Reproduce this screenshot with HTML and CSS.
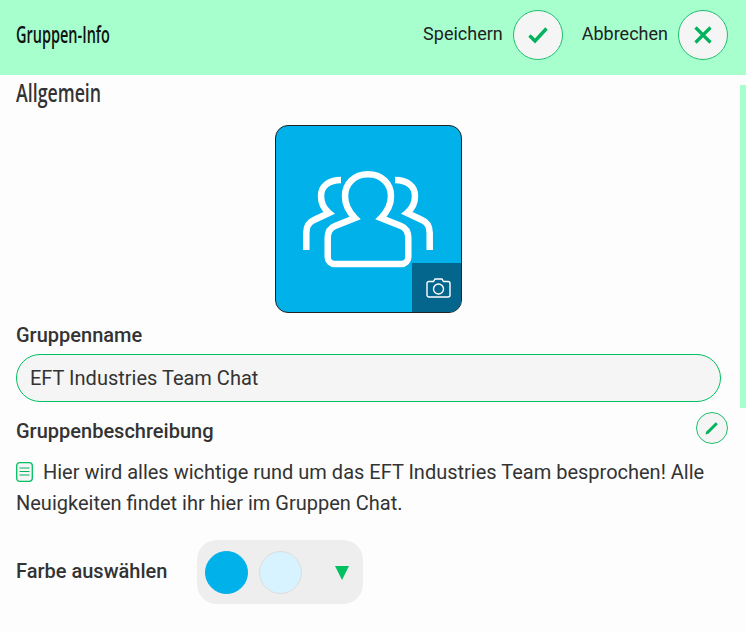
FILE: index.html
```html
<!DOCTYPE html>
<html lang="de">
<head>
    <meta charset="UTF-8">
    <meta name="viewport" content="width=device-width, initial-scale=1.0">
    <title>Gruppen-Info</title>
    <link rel="stylesheet" href="styles.css">
</head>
<body>
    <header class="topbar">
        <h1 class="topbar-title"><span class="narrow">Gruppen-Info</span></h1>
        <div class="topbar-actions">
            <span class="action-label">Speichern</span>
            <button class="round-btn">
                <svg width="20" height="17" viewBox="0 0 20 17"><path d="M1.500 8.500l5.500 5.500L18.500 1.500" fill="none" stroke="#00b35c" stroke-width="3.400"/></svg>
            </button>
            <span class="action-label action-label-second">Abbrechen</span>
            <button class="round-btn">
                <svg width="18" height="18" viewBox="0 0 18 18"><path d="M1.500 1.500l15 15M16.500 1.500l-15 15" fill="none" stroke="#00b35c" stroke-width="3.200"/></svg>
            </button>
        </div>
    </header>

    <div class="scroll-thumb"></div>

    <main class="content">
        <h2 class="section-title"><span class="narrow">Allgemein</span></h2>

        <div class="avatar-row">
            <div class="avatar">
                <svg class="avatar-icon" width="130" height="98" viewBox="0 0 130 98">
                    <g fill="none" stroke="#fff" stroke-width="6.500">
                        <path d="M65 4.200C51 4.200 42 14 42 26c0 9 4 16 10 22L32 56c-5 2-7.300 7-7.300 12v19a7 7 0 0 0 7 7h66.600a7 7 0 0 0 7-7V68c0-5-2.300-10-7.300-12L78 48c6-6 10-13 10-22C88 14 79 4.200 65 4.200z"/>
                        <path d="M38 10C26 10 18 16 18 26c0 7 2 12 8 17l-15 7c-5 2-7.700 7-7.700 13v17"/>
                        <path d="M92 10c12 0 20 6 20 16 0 7-2 12-8 17l15 7c5 2 7.700 7 7.700 13v17"/>
                    </g>
                </svg>
                <div class="avatar-camera">
                    <svg width="25" height="20" viewBox="0 0 25 20"><g fill="none" stroke="#fff" stroke-width="1.400"><path d="M3 3.500h4.500L9 1h7l1.500 2.500H22a2 2 0 0 1 2 2V17a2 2 0 0 1-2 2H3a2 2 0 0 1-2-2V5.500a2 2 0 0 1 2-2z"/><circle cx="12.500" cy="11" r="5"/></g></svg>
                </div>
            </div>
        </div>

        <label class="field-label name-label">Gruppenname</label>
        <div class="name-input">EFT Industries Team Chat</div>

        <div class="desc-head">
            <span class="field-label desc-label">Gruppenbeschreibung</span>
            <button class="round-btn round-btn-small">
                <svg width="14" height="14" viewBox="0 0 14 14"><path d="M0.500 13.500l0.700-2.800L10.800 1.200l2 2-9.500 9.600z" fill="#00b35c"/></svg>
            </button>
        </div>

        <p class="desc-text">
            <svg class="desc-icon" width="17" height="20" viewBox="0 0 17 20"><rect x="0.700" y="0.700" width="15.600" height="18.600" rx="3" fill="#f5f5f5" stroke="#00c060" stroke-width="1.300"/><path d="M3.500 6h10M3.500 9.500h10M3.500 13h10" stroke="#00b35c" stroke-width="1"/></svg>
            Hier wird alles wichtige rund um das EFT Industries Team besprochen! Alle Neuigkeiten findet ihr hier im Gruppen Chat.
        </p>

        <div class="color-row">
            <span class="field-label">Farbe auswählen</span>
            <div class="color-picker">
                <span class="swatch swatch-blue"></span>
                <span class="swatch swatch-light"></span>
                <span class="picker-arrow"></span>
            </div>
        </div>
    </main>
</body>
</html>
```

FILE: styles.css
```css
html, body {
    margin: 0;
    height: 632px;
    overflow: hidden;
    background: #fdfdfd;
}
body {
    position: relative;
    font-family: Roboto, Arial, sans-serif;
    color: #333;
}
.narrow {
    display: inline-block;
    font-family: "Open Sans", Arial, sans-serif;
    font-weight: 600;
    transform-origin: left center;
}
.topbar {
    height: 75px;
    box-sizing: border-box;
    background: #a6ffcd;
    display: flex;
    align-items: center;
    justify-content: space-between;
    padding: 0 18px 5px 16px;
}
.topbar-title {
    margin: -3px 0 0;
    font-size: 23px;
    color: #111;
}
.topbar-title .narrow {
    transform: scaleX(0.63);
}
.topbar-actions {
    display: flex;
    align-items: center;
}
.action-label {
    font-size: 18px;
    color: #222;
    margin-right: 10px;
    margin-top: -3px;
}
.action-label-second {
    margin-left: 19px;
}
.round-btn {
    width: 50px;
    height: 50px;
    padding: 0;
    border: 1px solid #1fbf6f;
    border-radius: 50%;
    background: #f5f5f5;
    display: flex;
    align-items: center;
    justify-content: center;
}
.round-btn-small {
    width: 32px;
    height: 32px;
}
.scroll-thumb {
    position: absolute;
    right: 0;
    top: 85px;
    width: 6px;
    height: 323px;
    background: #a6ffcd;
}
.content {
    padding: 0 18px 0 16px;
}
.section-title {
    margin: 0;
    height: 50px;
    font-size: 25px;
    line-height: 34px;
    color: #333;
}
.section-title .narrow {
    transform: scaleX(0.71);
}
.avatar-row {
    display: flex;
    justify-content: center;
    padding-right: 8px;
}
.avatar {
    position: relative;
    width: 185px;
    height: 186px;
    border: 1px solid #222;
    border-radius: 13px;
    background: #00b1ea;
    overflow: hidden;
}
.avatar-icon {
    position: absolute;
    left: 27px;
    top: 44px;
}
.avatar-camera {
    position: absolute;
    right: 0;
    bottom: 0;
    width: 49px;
    height: 49px;
    box-sizing: border-box;
    padding-left: 4px;
    background: #05668d;
    display: flex;
    align-items: center;
    justify-content: center;
}
.field-label {
    font-size: 20px;
    font-weight: 500;
    line-height: 22px;
    color: #333;
}
.name-label {
    display: block;
    margin-top: 11px;
}
.name-input {
    box-sizing: border-box;
    width: 705px;
    height: 48px;
    margin-top: 8px;
    padding: 0 13px;
    border: 1px solid #00c060;
    border-radius: 24px;
    background: #f5f5f5;
    font-size: 20px;
    line-height: 46px;
}
.desc-head {
    display: flex;
    align-items: center;
    justify-content: space-between;
    margin-top: 10px;
    height: 32px;
}
.desc-label {
    padding-top: 6px;
}
.desc-text {
    margin: 13px 0 0;
    font-size: 20px;
    line-height: 31px;
}
.desc-icon {
    vertical-align: -3px;
    margin-right: 5px;
}
.color-row {
    display: flex;
    align-items: center;
    margin-top: 21px;
}
.color-row .field-label {
    width: 181px;
    margin-top: -2px;
}
.color-picker {
    width: 166px;
    height: 64px;
    box-sizing: border-box;
    padding: 0 14px 0 8px;
    border-radius: 20px;
    background: #eee;
    display: flex;
    align-items: center;
}
.swatch {
    width: 43px;
    height: 43px;
    box-sizing: border-box;
    border-radius: 50%;
    border: 1px solid #ddd;
}
.swatch-blue {
    background: #00b1ea;
    border-color: #00b1ea;
}
.swatch-light {
    background: #d6f3ff;
    margin-left: 11px;
}
.picker-arrow {
    margin-left: auto;
    margin-top: 1px;
    width: 0;
    height: 0;
    border-left: 7.500px solid transparent;
    border-right: 7.500px solid transparent;
    border-top: 14px solid #00c060;
}
```
